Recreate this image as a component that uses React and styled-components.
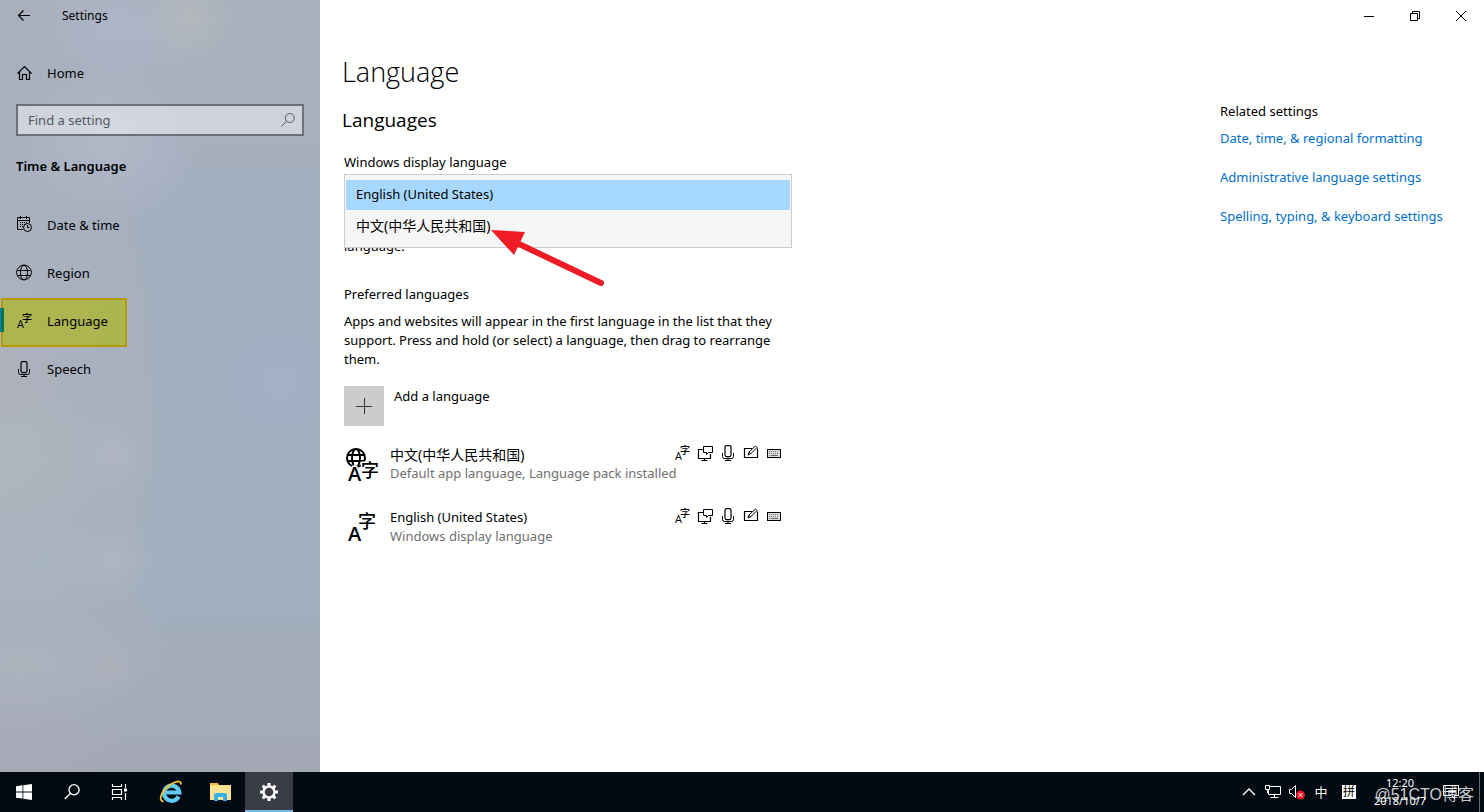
import React from "react";
import styled, { createGlobalStyle, css } from "styled-components";

const GlobalStyle = createGlobalStyle`
  *, *::before, *::after { box-sizing: border-box; }
  body { margin: 0; background: #fff; }
  body, button, input, select {
    font-family: "Noto Sans", "Noto Sans CJK SC", sans-serif;
    font-size: 13px;
    line-height: 18px;
    color: #000;
  }
  button { border: 0; padding: 0; background: none; }
  h1, h2, h3, p, ul { margin: 0; padding: 0; font-weight: inherit; }
  ul { list-style: none; }
  svg { display: block; flex: none; overflow: visible; }
`;

/* Shell */

const Desktop = styled.div`
  display: flex;
  flex-direction: column;
  min-height: 100vh;
`;

const Window = styled.div`
  flex: 1;
  display: flex;
`;

/* Sidebar */

const Sidebar = styled.aside`
  flex: none;
  width: 320px;
  background:
    radial-gradient(circle at 190px 18px, rgba(182, 187, 186, 0.7), transparent 50px),
    radial-gradient(ellipse 90px 60px at 120px 30px, rgba(174, 184, 204, 0.7), transparent),
    radial-gradient(ellipse 90px 80px at 110px 140px, rgba(180, 187, 203, 0.8), transparent),
    radial-gradient(circle at 114px 455px, rgba(180, 181, 196, 0.7), transparent 36px),
    radial-gradient(circle at 112px 560px, rgba(178, 181, 195, 0.7), transparent 34px),
    radial-gradient(circle at 112px 665px, rgba(176, 178, 188, 0.6), transparent 28px),
    radial-gradient(ellipse 150px 70px at 10px 460px, rgba(172, 184, 190, 0.8), transparent),
    radial-gradient(ellipse 150px 60px at 20px 560px, rgba(170, 183, 196, 0.7), transparent),
    radial-gradient(ellipse 160px 60px at 20px 665px, rgba(173, 181, 190, 0.7), transparent),
    radial-gradient(ellipse 130px 120px at 280px 380px, rgba(161, 177, 199, 0.7), transparent),
    radial-gradient(ellipse 190px 420px at 0 420px, rgba(176, 178, 188, 0.9), transparent),
    linear-gradient(#a9b0bd, #a3afbf 30%, #a2afbf 75%, #a4a8b4);
`;

const SidebarTitle = styled.div`
  display: flex;
  align-items: center;
  height: 32px;
  padding-left: 16px;
  gap: 30px;
  font-size: 12px;
`;

const NavLink = styled.a`
  position: relative;
  display: flex;
  align-items: center;
  gap: 15px;
  height: 48px;
  padding: 0 16px;
  color: #000;
  text-decoration: none;
`;

const HomeLink = styled(NavLink)`
  margin-top: 17px;
`;

const SelectedBar = styled.span`
  position: absolute;
  left: 0;
  top: 11px;
  width: 4px;
  height: 24px;
  border-left: 1px solid #0078d7;
  background: #007846;
`;

const Highlight = styled.span`
  position: absolute;
  left: 1px;
  top: 1px;
  width: 126px;
  height: 49px;
  border: 2px solid #b59b00;
  background: rgba(175, 184, 13, 0.62);
`;

const NavText = styled.span`
  position: relative;
`;

const SearchBox = styled.label`
  display: flex;
  align-items: center;
  height: 32px;
  margin: 7px 16px 0;
  padding: 0 6px 0 10px;
  border: 2px solid #6a7178;
  background: rgba(255, 255, 255, 0.45);
  color: #555b61;
`;

const SearchInput = styled.input`
  flex: 1;
  min-width: 0;
  padding: 0;
  border: 0;
  outline: 0;
  background: none;
  &::placeholder { color: #53585e; opacity: 1; }
`;

const Category = styled.h2`
  margin: 20px 16px 25px;
  font-size: 13px;
  line-height: 20px;
  font-weight: 600;
`;

/* Content */

const Main = styled.main`
  flex: 1;
  min-width: 0;
`;

const WindowControls = styled.div`
  display: flex;
  justify-content: flex-end;
`;

const WindowButton = styled.button`
  display: grid;
  place-items: center;
  width: 46px;
  height: 32px;
`;

const Columns = styled.div`
  display: flex;
  justify-content: space-between;
  padding: 23px 0 24px 24px;
`;

const Content = styled.div`
  flex: 0 1 448px;
  min-width: 0;
`;

const PageTitle = styled.h1`
  margin-left: -2px;
  font-family: "Open Sans", sans-serif;
  font-size: 27px;
  line-height: 34px;
  font-weight: 300;
`;

const SectionTitle = styled.h2`
  margin: 17px 0 19px -2px;
  font-family: "Open Sans", sans-serif;
  font-size: 19px;
  line-height: 28px;
  font-weight: 400;
`;

const Field = styled.div`
  position: relative;
  padding-top: 44px;
`;

const FieldLabel = styled.label`
  display: block;
  margin-bottom: 3px;
`;

const LanguageSelect = styled.select`
  position: absolute;
  z-index: 1;
  top: 0;
  left: 0;
  width: 100%;
  height: 74px;
  padding: 5px 1px;
  border: 1px solid #ccc;
  border-radius: 0;
  outline: 0;
  overflow: hidden;
  background: #f6f6f6;
  appearance: none;

  option {
    display: block;
    height: 30px;
    min-height: 30px;
    padding: 5px 10px;
    line-height: 18px;
    color: #000;
  }
  option:lang(zh) { font-size: 14px; }
  option:checked {
    color: #000;
    background: #a6d8ff linear-gradient(#a6d8ff, #a6d8ff);
  }
`;

const Paragraph = styled.p`
  max-width: 440px;
  line-height: 19px;
`;

const GroupTitle = styled.h3`
  margin: ${(p) => p.$space};
  font-size: 13px;
  line-height: 18px;
`;

const AddButton = styled.button`
  display: flex;
  align-items: flex-start;
  gap: 10px;
  margin-top: 17px;
  text-align: left;
`;

const AddTile = styled.span`
  display: grid;
  place-items: center;
  width: 40px;
  height: 40px;
  background: #ccc;
  color: #333;
`;

const AddText = styled.span`
  padding-top: 1px;
`;

const LanguageList = styled.ul`
  margin-top: 19px;
`;

const LanguageRow = styled.li`
  display: flex;
  align-items: flex-start;
  height: 63px;
`;

const LanguageInfo = styled.div`
  flex: 1;
  min-width: 0;
  margin-left: 10px;
  line-height: 19px;
  white-space: nowrap;
`;

const LanguageName = styled.div`
  height: 19px;
  &:lang(zh) { font-size: 14px; }
`;

const Muted = styled.div`
  color: #707070;
`;

const FeatureIcons = styled.div`
  display: flex;
  gap: 7px;
  margin-right: 10px;
`;

const Related = styled.aside`
  flex: none;
  width: 264px;
  padding-top: 47px;
`;

const RelatedLink = styled.a`
  display: block;
  margin-bottom: 21px;
  color: #0070d0;
  text-decoration: none;
`;

/* Taskbar */

const Taskbar = styled.footer`
  display: flex;
  justify-content: space-between;
  height: 40px;
  background: #020a12;
  color: #fff;
`;

const TaskGroup = styled.div`
  display: flex;
`;

const TaskButton = styled.button`
  display: grid;
  place-items: center;
  width: ${(p) => p.$width || 48}px;
  height: 40px;
  color: #fff;
  ${(p) => p.$active && css`
    background: #3a3d45;
    box-shadow: inset 0 -2px #76b9ed;
  `}
`;

const Ime = styled.span`
  font-size: 13px;
  line-height: 16px;
  ${(p) => p.$boxed && css`
    width: 14px;
    height: 14px;
    font-size: 12px;
    line-height: 14px;
    background: #fff;
    color: #000;
  `}
`;

const Clock = styled.button`
  width: 70px;
  color: #fff;
  font-size: 11px;
  line-height: 18px;
  text-align: center;
  white-space: nowrap;
`;

const Tray = styled(TaskGroup)`
  position: relative;
`;

const ShowDesktop = styled.button`
  width: 5px;
  margin-left: 12px;
  border-left: 1px solid #666a70;
`;

const Watermark = styled.span`
  position: absolute;
  right: 10px;
  top: 12px;
  font-family: "Liberation Sans", "Noto Sans CJK SC", sans-serif;
  font-size: 16px;
  line-height: 22px;
  white-space: nowrap;
  color: rgba(255, 255, 255, 0.8);
`;

const Pointer = styled.svg`
  position: absolute;
  z-index: 2;
  left: 147px;
  top: 54px;
  pointer-events: none;
`;

const Icon = ({ size = 16, children, ...rest }) => (
  <svg width={size} height={size} viewBox={`0 0 ${size} ${size}`} fill="none" stroke="currentColor" aria-hidden="true" {...rest}>
    {children}
  </svg>
);

const glyph = { fill: "currentColor", stroke: "none", fontFamily: '"Open Sans", "Noto Sans CJK SC", sans-serif' };
const cutout = { fill: "currentColor", stroke: "#fff", strokeWidth: 3, paintOrder: "stroke", fontFamily: glyph.fontFamily };

const BackIcon = () => <Icon><path d="M14 7.5H2.5M7.5 2.5l-5 5 5 5" strokeWidth="1.2" /></Icon>;
const HomeIcon = () => <Icon><path d="M1.5 8.5 8.5 1.5l7 7M3.5 7v7.5h3v-5h4v5h3V7" strokeWidth="1.2" /></Icon>;
const GlobeIcon = () => (
  <Icon><circle cx="8" cy="7.5" r="7.4" /><ellipse cx="8" cy="7.5" rx="3.5" ry="7.4" /><path d="M1.5 5.5h13M1.5 10.5h13" /></Icon>
);
const CalendarIcon = () => (
  <Icon>
    <path d="M7 12.5H1.5v-12h12V6M1.5 3.5h12M4.5-1v3M10.5-1v3" />
    <path d="M4 5.5h8M4 7.5h5M4 9.5h3" strokeDasharray="1 1" />
    <circle cx="11.5" cy="10.500" r="4" /><path d="M11.500 8v2.500h2" />
  </Icon>
);
const MicIcon = () => (
  <Icon><rect x="5" y=".6" width="6" height="11" rx="1.5" strokeWidth="1.2" /><path d="M2.5 8v3.500q0 2 2 2h7q2 0 2-2V8M8 13.500v2M5 15.500h6" /></Icon>
);
const TranslateIcon = () => (
  <Icon>
    <text x="1" y="15" fontSize="11" fontWeight="400" {...glyph}>A</text>
    <text x="6" y="9" fontSize="10" fontWeight="500" {...glyph}>字</text>
  </Icon>
);
const DisplayIcon = () => (
  <Icon><path d="M6 4.500H1.500v9h12V9M4.500 15.500h6M7.500 13.500v2" strokeWidth="1.2" /><path d="M6.500 1.500h9v6h-4l-2 2v-2h-3z" /></Icon>
);
const PenIcon = () => (
  <Icon><path d="M9 3.500H1.500v9h13v-9" strokeWidth="1.2" /><path d="m5 10 1-3 6.500-6 1.500 1.500L7.500 9zM6 7l1.500 2" /></Icon>
);
const KeyboardIcon = () => (
  <Icon>
    <rect x="1.5" y="4.500" width="13" height="8" fill="#ddd" />
    <path d="M3 6.500h10M3 8.500h10M3 10.500h2M11 10.500h2" stroke="#777" strokeDasharray="1 1" /><path d="M5 10.500h6" stroke="#666" />
  </Icon>
);
const SearchIcon = ({ size = 16, width = 1 }) => (
  <Icon size={size} viewBox="0 0 16 16"><circle cx="9.8" cy="6" r="4.5" strokeWidth={width} /><path d="m6.500 9.300-5 5" strokeWidth={width} /></Icon>
);
const LanguageGlyph = ({ globe }) => (
  <Icon size={36}>
    {globe && (
      <g strokeWidth="2">
        <circle cx="12" cy="13" r="9" />
        <ellipse cx="12" cy="13" rx="4" ry="9" />
        <path d="M4 10h16M4 16h16" />
      </g>
    )}
    <text x="4" y={globe ? 36 : 33} fontSize="20" fontWeight="600" {...cutout}>A</text>
    <text x={globe ? 17 : 14} y={globe ? 32 : 20} fontSize="18" fontWeight="500" {...cutout}>字</text>
  </Icon>
);
const WindowsLogo = () => (
  <Icon stroke="none" fill="#fff"><path d="M0 2.200 6.500 1.300v6.200H0zM7.300 1.200 16 0v7.500H7.300zM0 8.400h6.500v6.200L0 13.700zM7.300 8.400H16V16l-8.700-1.200z" /></Icon>
);
const TaskViewIcon = () => (
  <Icon size={18}><path d="M1.500 1v2.500h9V1M1.500 17v-2.500h9V17M1.500 6.500h9v5h-9zM14.500 1v4M14.500 10v7" strokeWidth="1.2" /><rect x="13" y="5.500" width="3" height="3" fill="#fff" stroke="none" /></Icon>
);
const BrowserIcon = () => (
  <Icon size={24}>
    <path d="M19.500 16.500a7.600 7.600 0 1 1 .7-4H7" stroke="#5fcaf6" strokeWidth="4.2" />
    <path d="M4.500 21.500C-1 21 2 12 9.500 6 15.500 1.200 22.500-.5 22 4.500" stroke="#f5c52c" strokeWidth="1.8" />
  </Icon>
);
const FolderIcon = () => (
  <Icon size={22} stroke="none">
    <path d="M0 2h8l1 2h12v15H0z" fill="#f9d978" /><path d="M0 5h21v14H0z" fill="#fee394" /><path d="M0 2h8v2H0z" fill="#f0bc3a" />
    <path d="M4 20v-6q0-2 2-2h9q2 0 2 2v6h-4v-4H8v4z" fill="#35b0ea" />
  </Icon>
);
const GearIcon = () => (
  <Icon size={20}>
    <circle cx="10" cy="10" r="5.5" strokeWidth="2.4" />
    {[0, 45, 90, 135, 180, 225, 270, 315].map((a) => (
      <path key={a} d="M10 1v3.500" strokeWidth="3" transform={`rotate(${a} 10 10)`} />
    ))}
  </Icon>
);

const navItems = [
  { label: "Date & time", icon: <CalendarIcon /> },
  { label: "Region", icon: <GlobeIcon /> },
  { label: "Language", icon: <TranslateIcon />, selected: true },
  { label: "Speech", icon: <MicIcon /> },
];

const languages = [
  { lang: "zh", name: "中文(中华人民共和国)", note: "Default app language, Language pack installed", globe: true },
  { lang: "en", name: "English (United States)", note: "Windows display language" },
];

const relatedLinks = ["Date, time, & regional formatting", "Administrative language settings", "Spelling, typing, & keyboard settings"];

export default function App() {
  return (
    <Desktop>
      <GlobalStyle />
      <Window>
        <Sidebar>
          <SidebarTitle>
            <button aria-label="Back"><BackIcon /></button>
            <span>Settings</span>
          </SidebarTitle>
          <HomeLink href="#home"><HomeIcon />Home</HomeLink>
          <SearchBox>
            <SearchInput type="text" placeholder="Find a setting" aria-label="Find a setting" />
            <SearchIcon />
          </SearchBox>
          <Category>Time &amp; Language</Category>
          <ul>
            {navItems.map((item) => (
              <li key={item.label}>
                <NavLink href="#settings" aria-current={item.selected ? "page" : undefined}>
                  {item.selected && <><Highlight /><SelectedBar /></>}
                  <NavText>{item.icon}</NavText>
                  <NavText>{item.label}</NavText>
                </NavLink>
              </li>
            ))}
          </ul>
        </Sidebar>
        <Main>
          <WindowControls>
            <WindowButton aria-label="Minimize"><Icon size={10}><path d="M0 5.500h10" /></Icon></WindowButton>
            <WindowButton aria-label="Restore"><Icon size={10}><path d="M.5 2.500h7v7h-7zM2.500 2.500v-2h7v7h-2" /></Icon></WindowButton>
            <WindowButton aria-label="Close"><Icon size={10}><path d="m0 0 10 10M10 0 0 10" /></Icon></WindowButton>
          </WindowControls>
          <Columns>
            <Content>
              <PageTitle>Language</PageTitle>
              <SectionTitle>Languages</SectionTitle>
              <FieldLabel htmlFor="display-language">Windows display language</FieldLabel>
              <Field>
                <LanguageSelect id="display-language" size={2} defaultValue="en">
                  <option value="en">English (United States)</option>
                  <option value="zh" lang="zh">中文(中华人民共和国)</option>
                </LanguageSelect>
                <Pointer width="116" height="62" viewBox="0 0 116 62" aria-hidden="true">
                  <path d="m28 16 82 39" stroke="#ee1c25" strokeWidth="6" strokeLinecap="round" />
                  <path d="m0 2 34 2-11 23z" fill="#ee1c25" />
                </Pointer>
                <Paragraph>
                  Windows features like Settings and File Explorer will appear in this<br />language.
                </Paragraph>
              </Field>
              <GroupTitle $space="29px 0 9px">Preferred languages</GroupTitle>
              <Paragraph>
                Apps and websites will appear in the first language in the list that they support. Press and hold (or select) a language, then drag to rearrange them.
              </Paragraph>
              <AddButton>
                <AddTile><Icon><path d="M0 8.500h16M8.500 0v16" /></Icon></AddTile>
                <AddText>Add a language</AddText>
              </AddButton>
              <LanguageList>
                {languages.map((l) => (
                  <LanguageRow key={l.name}>
                    <LanguageGlyph globe={l.globe} />
                    <LanguageInfo>
                      <LanguageName lang={l.lang}>{l.name}</LanguageName>
                      <Muted>{l.note}</Muted>
                    </LanguageInfo>
                    <FeatureIcons>
                      <TranslateIcon /><DisplayIcon /><MicIcon /><PenIcon /><KeyboardIcon />
                    </FeatureIcons>
                  </LanguageRow>
                ))}
              </LanguageList>
            </Content>
            <Related>
              <GroupTitle $space="0 0 9px">Related settings</GroupTitle>
              {relatedLinks.map((t) => <RelatedLink key={t} href="#related">{t}</RelatedLink>)}
            </Related>
          </Columns>
        </Main>
      </Window>
      <Taskbar>
        <TaskGroup>
          <TaskButton aria-label="Start"><WindowsLogo /></TaskButton>
          <TaskButton aria-label="Search"><SearchIcon size={18} width={1.2} /></TaskButton>
          <TaskButton aria-label="Task View"><TaskViewIcon /></TaskButton>
          <TaskButton aria-label="Internet Explorer" $width={53}><BrowserIcon /></TaskButton>
          <TaskButton aria-label="File Explorer"><FolderIcon /></TaskButton>
          <TaskButton aria-label="Settings" $active><GearIcon /></TaskButton>
        </TaskGroup>
        <Tray>
          <TaskButton $width={24} aria-label="Show hidden icons"><Icon><path d="m2 11 6-6 6 6" strokeWidth="1.3" /></Icon></TaskButton>
          <TaskButton $width={24} aria-label="Network">
            <Icon><path d="M5 2.500h10.500v8H3.500V6M9.500 10.500v3M5.500 13.500h8M.5 1.500h4v4h-4zM2.500 5.500V9" /></Icon>
          </TaskButton>
          <TaskButton $width={24} aria-label="Volume muted">
            <Icon>
              <path d="M.5 5.500h2l4-4v12l-4-4h-2z" />
              <circle cx="11.5" cy="11" r="4.5" fill="#e81123" stroke="none" /><path d="m9.500 9 4 4M13.500 9l-4 4" />
            </Icon>
          </TaskButton>
          <TaskButton $width={24} aria-label="Input language"><Ime>中</Ime></TaskButton>
          <TaskButton $width={32} aria-label="Input method"><Ime $boxed>拼</Ime></TaskButton>
          <Clock>12:20<br />2018/10/7</Clock>
          <TaskButton $width={32} aria-label="Action center">
            <Icon><path d="M.5 1.500h15v10h-4v3l-3-3h-8zM3 4.500h10M3 7.500h10" /></Icon>
          </TaskButton>
          <ShowDesktop aria-label="Show desktop" />
          <Watermark>@51CTO博客</Watermark>
        </Tray>
      </Taskbar>
    </Desktop>
  );
}
